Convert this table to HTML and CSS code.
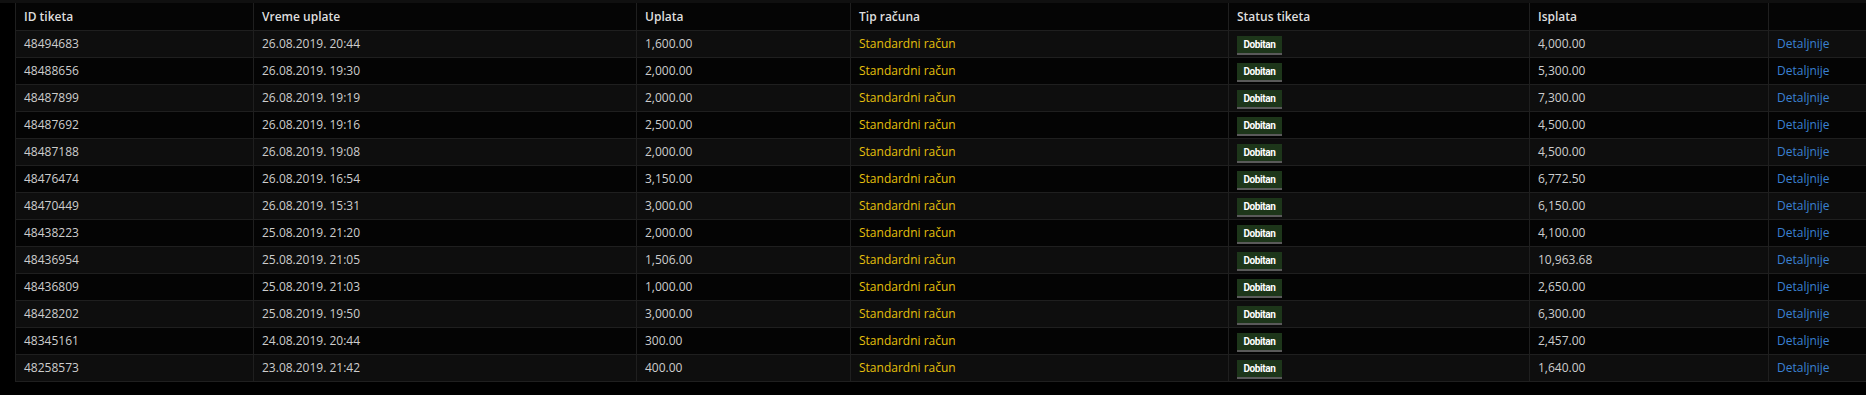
FILE: index.html
```html
<!DOCTYPE html>
<html>
<head>
<meta charset="utf-8">
<link rel="stylesheet" href="styles.css">
</head>
<body>
<div class="page">
<table class="tickets">
<colgroup>
<col class="c1"><col class="c2"><col class="c3"><col class="c4"><col class="c5"><col class="c6"><col class="c7">
</colgroup>
<thead>
<tr><th>ID tiketa</th><th>Vreme uplate</th><th>Uplata</th><th>Tip računa</th><th>Status tiketa</th><th>Isplata</th><th></th></tr>
</thead>
<tbody>
<tr><td>48494683</td><td>26.08.2019. 20:44</td><td>1,600.00</td><td class="type">Standardni račun</td><td class="status"><span class="badge">Dobitan</span></td><td>4,000.00</td><td><a class="link">Detaljnije</a></td></tr>
<tr><td>48488656</td><td>26.08.2019. 19:30</td><td>2,000.00</td><td class="type">Standardni račun</td><td class="status"><span class="badge">Dobitan</span></td><td>5,300.00</td><td><a class="link">Detaljnije</a></td></tr>
<tr><td>48487899</td><td>26.08.2019. 19:19</td><td>2,000.00</td><td class="type">Standardni račun</td><td class="status"><span class="badge">Dobitan</span></td><td>7,300.00</td><td><a class="link">Detaljnije</a></td></tr>
<tr><td>48487692</td><td>26.08.2019. 19:16</td><td>2,500.00</td><td class="type">Standardni račun</td><td class="status"><span class="badge">Dobitan</span></td><td>4,500.00</td><td><a class="link">Detaljnije</a></td></tr>
<tr><td>48487188</td><td>26.08.2019. 19:08</td><td>2,000.00</td><td class="type">Standardni račun</td><td class="status"><span class="badge">Dobitan</span></td><td>4,500.00</td><td><a class="link">Detaljnije</a></td></tr>
<tr><td>48476474</td><td>26.08.2019. 16:54</td><td>3,150.00</td><td class="type">Standardni račun</td><td class="status"><span class="badge">Dobitan</span></td><td>6,772.50</td><td><a class="link">Detaljnije</a></td></tr>
<tr><td>48470449</td><td>26.08.2019. 15:31</td><td>3,000.00</td><td class="type">Standardni račun</td><td class="status"><span class="badge">Dobitan</span></td><td>6,150.00</td><td><a class="link">Detaljnije</a></td></tr>
<tr><td>48438223</td><td>25.08.2019. 21:20</td><td>2,000.00</td><td class="type">Standardni račun</td><td class="status"><span class="badge">Dobitan</span></td><td>4,100.00</td><td><a class="link">Detaljnije</a></td></tr>
<tr><td>48436954</td><td>25.08.2019. 21:05</td><td>1,506.00</td><td class="type">Standardni račun</td><td class="status"><span class="badge">Dobitan</span></td><td>10,963.68</td><td><a class="link">Detaljnije</a></td></tr>
<tr><td>48436809</td><td>25.08.2019. 21:03</td><td>1,000.00</td><td class="type">Standardni račun</td><td class="status"><span class="badge">Dobitan</span></td><td>2,650.00</td><td><a class="link">Detaljnije</a></td></tr>
<tr><td>48428202</td><td>25.08.2019. 19:50</td><td>3,000.00</td><td class="type">Standardni račun</td><td class="status"><span class="badge">Dobitan</span></td><td>6,300.00</td><td><a class="link">Detaljnije</a></td></tr>
<tr><td>48345161</td><td>24.08.2019. 20:44</td><td>300.00</td><td class="type">Standardni račun</td><td class="status"><span class="badge">Dobitan</span></td><td>2,457.00</td><td><a class="link">Detaljnije</a></td></tr>
<tr><td>48258573</td><td>23.08.2019. 21:42</td><td>400.00</td><td class="type">Standardni račun</td><td class="status"><span class="badge">Dobitan</span></td><td>1,640.00</td><td><a class="link">Detaljnije</a></td></tr>
</tbody>
</table>
</div>
</body>
</html>
```
FILE: styles.css
```css
html, body {
  margin: 0;
  padding: 0;
  background: #000;
}
.page {
  border-top: 3px solid #101010;
  padding-left: 15px;
  font-family: "Open Sans", "Liberation Sans", sans-serif;
  font-size: 12px;
  color: #cdcdcd;
}
.tickets {
  width: 1851px;
  border-collapse: collapse;
  table-layout: fixed;
}
.c1 { width: 238px; }
.c2 { width: 383px; }
.c3 { width: 214px; }
.c4 { width: 378px; }
.c5 { width: 301px; }
.c6 { width: 239px; }
.c7 { width: 98px; }
.tickets th, .tickets td {
  height: 26px;
  padding: 0 0 0 8px;
  border: 1px solid #1f1f1f;
  text-align: left;
  vertical-align: middle;
  white-space: nowrap;
  line-height: 16px;
}
.tickets th {
  height: 27px;
  font-weight: 600;
  color: #dedede;
  background: #050505;
  border-top: none;
}
.tickets tbody tr:nth-child(odd) td { background: #0e0e0e; }
.tickets tbody tr:nth-child(even) td { background: #040404; }
.type { color: #e6c00c; }
.link { color: #3a80d2; text-decoration: none; }
.tickets td.status {
  vertical-align: top;
  padding-top: 5px;
  height: 21px;
}
.badge {
  display: inline-block;
  box-sizing: border-box;
  width: 45px;
  height: 19px;
  background: #1d361a;
  border-bottom: 2px solid #5a5a5a;
  color: #fff;
  font-family: Roboto, "Liberation Sans", sans-serif;
  font-weight: 700;
  font-size: 10px;
  letter-spacing: -0.4px;
  line-height: 17px;
  text-align: center;
}
```
